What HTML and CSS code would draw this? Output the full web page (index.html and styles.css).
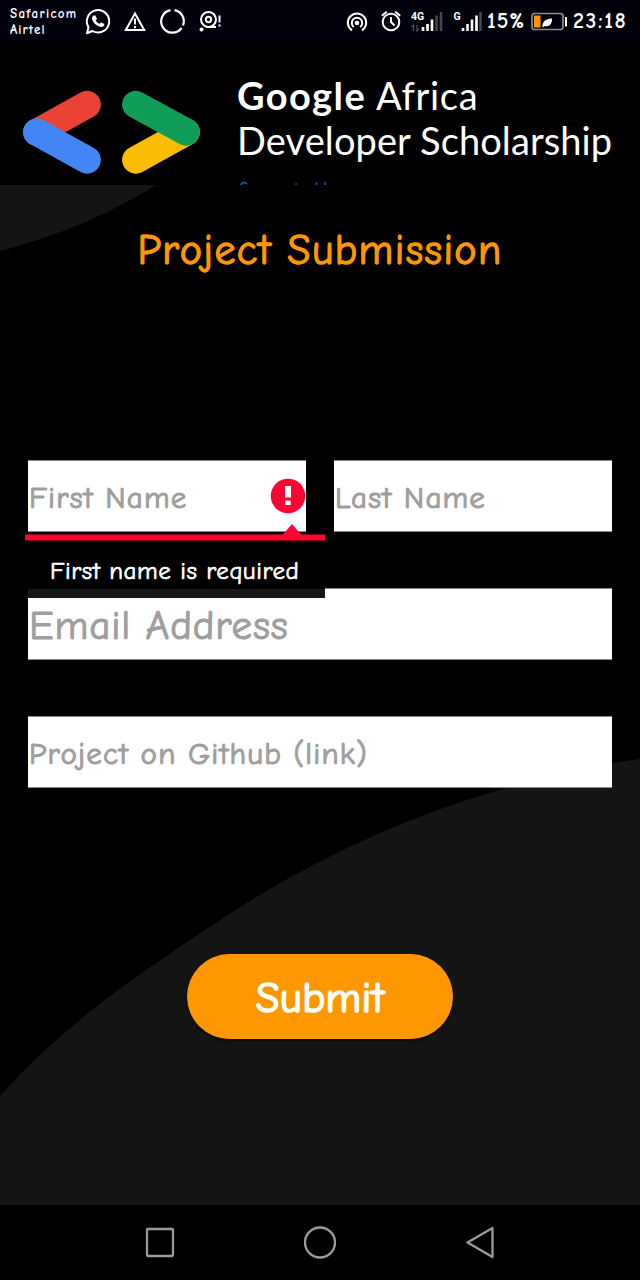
FILE: index.html
```html
<!DOCTYPE html>
<html lang="en">
<head>
<meta charset="utf-8">
<title>Project Submission</title>
<link rel="stylesheet" href="styles.css">
</head>
<body>
<div class="screen">
  <header class="status">
    <div class="carriers"><span class="carrier-a">Safaricom</span><span class="carrier-b">Airtel</span></div>
    <svg class="status-left" width="144" height="42" viewBox="84 0 144 42" fill="none" stroke="#fff" stroke-width="2">
      <path d="M87 33.200l1.500-6A11.200 11.200 0 1 1 92.400 31z" stroke-linejoin="round"/>
      <path d="M93.200 15.800l2-.5 1.800 3.400-1.200 1.700c1 1.700 2 2.600 3.700 3.300l1.600-1.500 3.300 1.700c-.1 2-1.400 3.100-3.300 3-4.800-.6-9-5.200-9.100-8.700.1-1 .5-1.800 1.200-2.400z" fill="#fff" stroke="none"/>
      <path d="M135 13.500l9.200 16.500h-18.400z"/><path d="M135 18.500v6M135 26v2.200"/>
      <path d="M174.500 10.200A11.300 11.300 0 0 1 183 25.500M181.600 28A11.300 11.300 0 1 1 170.500 10.200" stroke-width="2.200"/>
      <circle cx="208.500" cy="19.500" r="7.500"/><circle cx="208.500" cy="19.500" r="2.700"/>
      <path d="M206 27h10"/><circle cx="201.500" cy="29.500" r="2" fill="#fff" stroke="none"/>
      <path d="M219.500 15.500v7M219.500 24.500v2"/>
    </svg>
    <svg class="status-right" width="140" height="42" viewBox="345 0 140 42" fill="none" stroke="#fff" stroke-width="2">
      <circle cx="357" cy="23" r="2.300" fill="#fff" stroke="none"/>
      <path d="M353.800 27a5.200 5.200 0 1 1 6.400 0M352 30.300a9.200 9.200 0 1 1 10 0"/>
      <circle cx="391" cy="22" r="8.300"/><path d="M391 17v5l3.500 3.500M381.800 15.800l5-4M400.200 15.800l-5-4"/>
      <g stroke-width="2.600"><path d="M423 27v4M427.500 24v7M432 19.500v11.500"/><path d="M436.500 15.500v15.500M441 12v19" stroke="#44444c"/>
      <path d="M463 28v3M467.500 24v7M472 19.500v11.500M476.500 15.500v15.500"/><path d="M480.500 12v19" stroke="#44444c"/></g>
      <path d="M413.500 31v-6l-2 2M417 25v6l2-2" stroke="#44444c" stroke-width="1.500"/>
      <g class="net"><text x="411" y="19.500">4G</text><text x="453.500" y="19.500">G</text></g>
    </svg>
    <span class="percent">15%</span>
    <svg class="battery" width="38" height="42" viewBox="530 0 38 42">
      <rect x="532" y="13.500" width="31" height="16" rx="2.500" fill="none" stroke="#8b8b90" stroke-width="1.700"/>
      <rect x="534" y="15.500" width="6.500" height="12" fill="#ff9800"/>
      <path d="M542.500 27.500c-.5-6 3-8.500 9.500-9 .2 5-2 8.500-7 7.500z" fill="#fff"/>
      <path d="M566 17v9.500" stroke="#fff" stroke-width="2"/>
    </svg>
    <span class="clock">23:18</span>
  </header>

  <section class="banner">
    <svg class="logo" width="180" height="86" viewBox="22 89 180 86" fill="none" stroke-width="27.300" stroke-linecap="round">
      <path d="M87.200 104.500l-50.500 28" stroke="#ea4335"/>
      <path d="M36.700 132l50.500 28" stroke="#4285f4"/>
      <path d="M135.700 160l50.500-28" stroke="#fbbc04"/>
      <path d="M135.700 104.500l50.500 27.500" stroke="#0f9d58"/>
    </svg>
    <div class="brand">
      <div class="brand-line"><b class="google">Google</b> <span class="africa">Africa</span></div>
      <div class="brand-line">Developer Scholarship</div>
      <div class="support">Supported by</div>
    </div>
  </section>

  <main class="content">
    <svg class="backdrop" width="640" height="1020" viewBox="0 185 640 1020" fill="#151515">
      <path d="M0 185h156Q88 228 0 251z"/>
      <path d="M0 1096Q50 1040 122 987Q188 940 253 899Q375 825 503 789Q570 768 640 759V1205H0z"/>
    </svg>
    <h1 class="title">Project Submission</h1>
    <form class="form">
      <div class="row">
        <div class="field">
          <span class="hint">First Name</span>
          <svg class="alert" width="36" height="36" viewBox="0 0 36 36"><circle cx="18" cy="18" r="17.300" fill="#ff0335"/><path d="M15 8h6v11.500h-6zM15.300 22.500h5.400v4.500h-5.400z" fill="#fff"/></svg>
          <div class="popup">
            <svg class="pointer" width="300" height="17" viewBox="0 0 300 17"><path d="M0 10.500h258l9-10.500 9 10.500h24v6H0z" fill="#ff0335"/></svg>
            <div class="message">First name is required</div>
          </div>
        </div>
        <div class="field"><span class="hint">Last Name</span></div>
      </div>
      <div class="field"><span class="hint email">Email Address</span></div>
      <div class="field"><span class="hint">Project on Github (link)</span></div>
      <button class="submit" type="button">Submit</button>
    </form>
  </main>

  <nav class="nav">
    <svg width="32" height="34" viewBox="0 0 32 34"><rect x="3" y="4" width="26" height="27" rx="1"/></svg>
    <svg width="32" height="34" viewBox="0 0 32 34"><circle cx="16" cy="17.500" r="15"/></svg>
    <svg width="32" height="34" viewBox="0 0 32 34"><path d="M28.500 3v29L3.500 17.500z"/></svg>
  </nav>
</div>
</body>
</html>
```
FILE: styles.css
```css
* { box-sizing: border-box; }
body { margin: 0; background: #000; }
.screen {
  width: 640px;
  height: 1280px;
  display: flex;
  flex-direction: column;
  overflow: hidden;
  background: #000;
  color: #fff;
  font-family: "Choco Cooky", "Comic Neue", Lato, sans-serif;
  font-weight: 400;
}
.status {
  height: 42px;
  display: flex;
  background: #01010c;
  padding-left: 10px;
}
.carriers {
  width: 74px;
  padding-top: 6px;
  display: flex;
  flex-direction: column;
  font-size: 13px;
  line-height: 16px;
  font-weight: 700;
  white-space: nowrap;
}
.carrier-a { letter-spacing: 1.3px; }
.carrier-b { letter-spacing: 1.1px; }
.status-left { margin-right: 117px; }
.net { fill: #fff; stroke: none; font: 700 10.5px Roboto, sans-serif; }
.percent, .clock { font-size: 22px; line-height: 43px; font-weight: 700; white-space: nowrap; }
.percent { width: 43px; padding-left: 2px; letter-spacing: 1px; }
.battery { margin-left: 2px; }
.clock { padding-left: 5px; letter-spacing: 1.6px; }
.status svg { flex: none; }

.banner {
  height: 143px;
  display: flex;
  overflow: hidden;
  padding-left: 22px;
}
.logo { margin-top: 47px; flex: none; }
.brand {
  padding: 31px 0 0 35px;
  font-family: Lato, sans-serif;
  white-space: nowrap;
}
.brand-line { font-size: 38px; line-height: 45px; letter-spacing: .1px; }
.google { letter-spacing: 1.4px; }
.africa { letter-spacing: .7px; }
.support { padding: 16px 0 0 2px; font-size: 17px; line-height: 20px; letter-spacing: .2px; color: #1a56c4; }

.content { position: relative; height: 1020px; padding: 0 28px; }
.backdrop { position: absolute; left: 0; top: 0; }
.title {
  position: relative;
  margin: 0;
  padding-top: 42px;
  height: 275px;
  text-align: center;
  color: #ff9800;
  font-size: 42px;
  line-height: 48px;
  font-weight: 400;
  letter-spacing: 1.4px;
  -webkit-text-stroke: 1.3px currentColor;
  white-space: nowrap;
}
.form { position: relative; display: flex; flex-direction: column; gap: 56px; }
.row { display: grid; grid-template-columns: 1fr 1fr; gap: 28px; }
.row .field:first-child { z-index: 1; }
.field {
  position: relative;
  height: 72px;
  display: flex;
  align-items: center;
  justify-content: space-between;
  background: #fff;
  border: 1px solid #8a8a8a;
  border-width: 1px 0;
  padding-left: 1px;
}
.hint {
  padding-top: 4px;
  color: #9e9e9e;
  font-size: 31px;
  line-height: 36px;
  letter-spacing: 1.15px;
  -webkit-text-stroke: 1px currentColor;
  white-space: nowrap;
}
.email { font-size: 41px; line-height: 48px; letter-spacing: .8px; }
.popup { position: absolute; left: -3px; top: 63px; width: 300px; }
.pointer { display: block; }
.message {
  height: 57px;
  margin-left: 3px;
  padding: 14px 0 0 22px;
  border-bottom: 9px solid #171717;
  background: #000;
  font-size: 25px;
  line-height: 32px;
  letter-spacing: .55px;
  -webkit-text-stroke: .7px currentColor;
  white-space: nowrap;
}
.submit {
  align-self: center;
  width: 266px;
  height: 85px;
  margin-top: 110px;
  border: 0;
  border-radius: 43px;
  padding: 3px 0 0;
  background: #ff9800;
  box-shadow: 0 2px 4px rgba(0, 0, 0, .5);
  color: #fff;
  font: inherit;
  font-size: 43px;
  letter-spacing: .4px;
  -webkit-text-stroke: 1.7px currentColor;
}
.nav { height: 75px; display: flex; justify-content: center; gap: 128px; padding-top: 20px; }
.nav svg { fill: none; stroke: #9b9b9b; stroke-width: 2.3; stroke-linejoin: round; }
```
